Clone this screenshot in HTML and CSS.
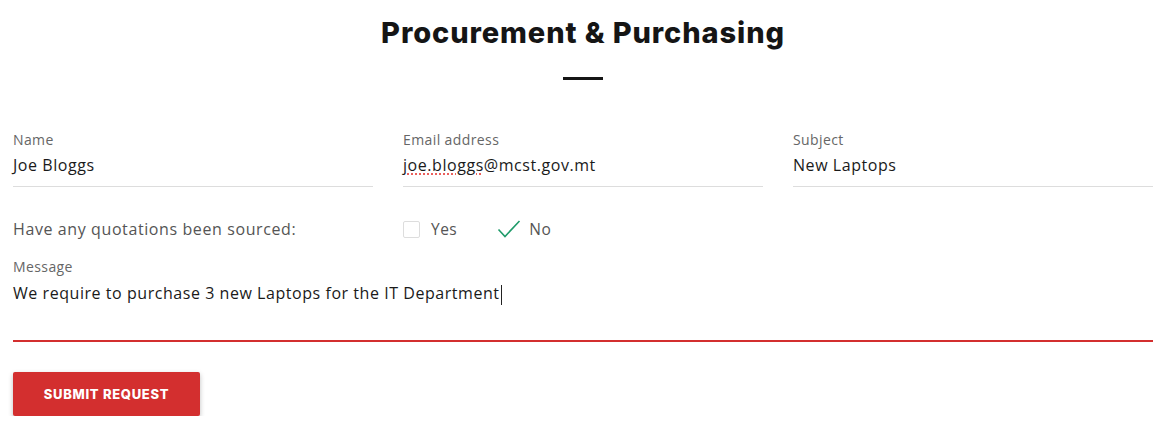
FILE: index.html
```html
<!DOCTYPE html>
<html>
<head>
<meta charset="utf-8">
<link rel="stylesheet" href="styles.css">
</head>
<body>
<div class="page">
  <h1 class="title">Procurement &amp; Purchasing</h1>
  <div class="divider"></div>
  <div class="row">
    <div class="field">
      <div class="label">Name</div>
      <div class="value">Joe Bloggs</div>
    </div>
    <div class="field">
      <div class="label">Email address</div>
      <div class="value"><span class="spell">joe.bloggs</span>@mcst.gov.mt</div>
    </div>
    <div class="field">
      <div class="label">Subject</div>
      <div class="value">New Laptops</div>
    </div>
  </div>
  <div class="question">
    <div class="qtext">Have any quotations been sourced:</div>
    <div class="options">
      <div class="opt"><span class="box"></span><span>Yes</span></div>
      <div class="opt"><svg class="check" width="24" height="18" viewBox="0 0 24 18"><path d="M1.5 9.5 L8 16.5 L22.5 1" fill="none" stroke="#1f9b6a" stroke-width="1.6"/></svg><span>No</span></div>
    </div>
  </div>
  <div class="message">
    <div class="label">Message</div>
    <div class="mvalue">We require to purchase 3 new Laptops for the IT Department<span class="caret"></span></div>
  </div>
  <button class="submit">SUBMIT REQUEST</button>
</div>
</body>
</html>
```
FILE: styles.css
```css
* { box-sizing: border-box; }
body {
  margin: 0;
  background: #fff;
  font-family: "Open Sans", "Noto Sans", sans-serif;
  color: #222;
}
.page {
  width: 1140px;
  margin-left: 13px;
  padding-top: 14px;
}
.title {
  margin: 0;
  text-align: center;
  font-family: "Inter", "Liberation Sans", sans-serif;
  font-weight: 800;
  font-size: 29px;
  line-height: 38px;
  color: #151515;
  letter-spacing: 0.9px;
}
.divider {
  width: 40px;
  height: 3px;
  background: #151515;
  margin: 25px auto 0;
}
.row {
  display: grid;
  grid-template-columns: repeat(3, 360px);
  column-gap: 30px;
  margin-top: 50px;
}
.label {
  font-size: 14px;
  line-height: 20px;
  color: #666;
  letter-spacing: 0.4px;
}
.value {
  font-size: 16px;
  line-height: 22px;
  color: #1a1a1a;
  letter-spacing: 0.55px;
  margin-top: 4px;
  padding-bottom: 10px;
  border-bottom: 1px solid #ddd;
}
.spell {
  text-decoration: underline dotted #e53935;
  text-underline-offset: 3px;
}
.question {
  display: flex;
  align-items: center;
  margin-top: 31px;
  height: 22px;
}
.qtext {
  width: 390px;
  font-size: 16px;
  letter-spacing: 0.6px;
  color: #555;
}
.options {
  display: flex;
  align-items: center;
  gap: 40px;
  font-size: 15.5px;
  letter-spacing: 0.5px;
  color: #555;
}
.opt {
  display: flex;
  align-items: center;
  gap: 11px;
}
.box {
  width: 17px;
  height: 17px;
  border: 1.5px solid #ddd;
  border-radius: 2px;
}
.check { display: block; margin-right: -3px; }
.message {
  margin-top: 17px;
  border-bottom: 2px solid #d32f2f;
  padding-bottom: 35px;
}
.mvalue {
  font-size: 16px;
  line-height: 22px;
  letter-spacing: 0.55px;
  color: #1a1a1a;
  margin-top: 5px;
}
.caret {
  display: inline-block;
  width: 1px;
  height: 20px;
  background: #222;
  vertical-align: middle;
  margin-left: 1px;
}
.submit {
  display: block;
  margin-top: 30px;
  width: 187px;
  height: 44px;
  border: 0;
  border-radius: 2px;
  background: #d32f2f;
  color: #fff;
  font-family: "Inter", "Liberation Sans", sans-serif;
  font-weight: 800;
  font-size: 13px;
  letter-spacing: 0.7px;
  box-shadow: 0 2px 5px rgba(0,0,0,0.25);
  padding: 0;
}
```
